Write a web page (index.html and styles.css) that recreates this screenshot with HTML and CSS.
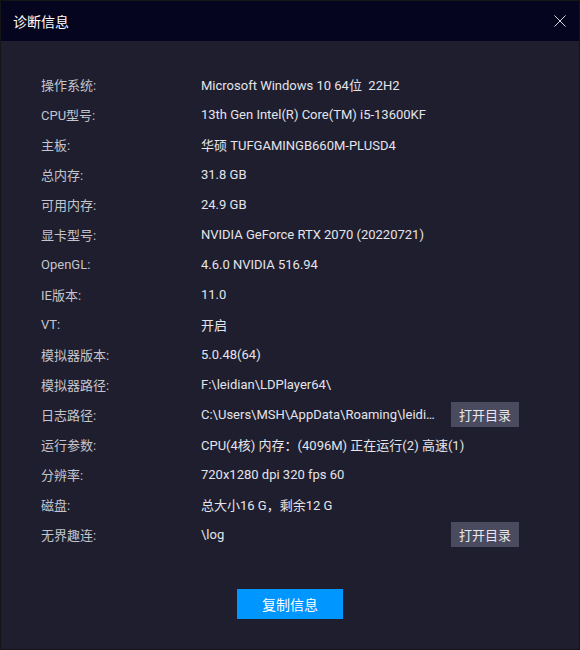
FILE: index.html
```html
<!DOCTYPE html>
<html lang="zh">
<head>
  <meta charset="UTF-8" />
  <title>诊断信息</title>
  <link rel="stylesheet" href="styles.css">
</head>
<body>
  <div class="dialog">
    <header class="dialog-header">
      <div class="dialog-title">诊断信息</div>
      <button class="close-btn" aria-label="关闭">
        <svg width="12" height="12" viewBox="0 0 12 12">
          <path d="M0.5 0.5L11.5 11.5M11.5 0.5L0.5 11.5" stroke="#d8d8e0" stroke-width="1" fill="none" />
        </svg>
      </button>
    </header>

    <main class="info-list">
      <div class="info-row"><span class="label">操作系统:</span><span class="value">Microsoft Windows 10 64位&nbsp;&nbsp;22H2</span></div>
      <div class="info-row"><span class="label">CPU型号:</span><span class="value">13th Gen Intel(R) Core(TM) i5-13600KF</span></div>
      <div class="info-row"><span class="label">主板:</span><span class="value">华硕 TUFGAMINGB660M-PLUSD4</span></div>
      <div class="info-row"><span class="label">总内存:</span><span class="value">31.8 GB</span></div>
      <div class="info-row"><span class="label">可用内存:</span><span class="value">24.9 GB</span></div>
      <div class="info-row"><span class="label">显卡型号:</span><span class="value">NVIDIA GeForce RTX 2070 (20220721)</span></div>
      <div class="info-row"><span class="label">OpenGL:</span><span class="value">4.6.0 NVIDIA 516.94</span></div>
      <div class="info-row"><span class="label">IE版本:</span><span class="value">11.0</span></div>
      <div class="info-row"><span class="label">VT:</span><span class="value">开启</span></div>
      <div class="info-row"><span class="label">模拟器版本:</span><span class="value">5.0.48(64)</span></div>
      <div class="info-row"><span class="label">模拟器路径:</span><span class="value">F:\leidian\LDPlayer64\</span></div>
      <div class="info-row"><span class="label">日志路径:</span><span class="value">C:\Users\MSH\AppData\Roaming\leidian\LDPlayer64\log</span><button class="open-btn">打开目录</button></div>
      <div class="info-row"><span class="label">运行参数:</span><span class="value">CPU(4核) 内存：(4096M) 正在运行(2) 高速(1)</span></div>
      <div class="info-row"><span class="label">分辨率:</span><span class="value">720x1280 dpi 320 fps 60</span></div>
      <div class="info-row"><span class="label">磁盘:</span><span class="value">总大小16 G，剩余12 G</span></div>
      <div class="info-row"><span class="label">无界趣连:</span><span class="value">\log</span><button class="open-btn">打开目录</button></div>
    </main>

    <div class="dialog-footer">
      <button class="copy-btn">复制信息</button>
    </div>
  </div>
</body>
</html>
```

FILE: styles.css
```css
* {
  margin: 0;
  padding: 0;
  box-sizing: border-box;
}

body {
  font-family: Roboto, "Noto Sans CJK SC", sans-serif;
  background: #0c0c0c;
}

.dialog {
  width: 580px;
  height: 650px;
  border: 1px solid #151515;
  background-color: #1e1e2f;
  display: flex;
  flex-direction: column;
}

.dialog-header {
  height: 40px;
  background-color: #050520;
  display: flex;
  align-items: center;
  justify-content: space-between;
  padding: 0 13px 0 12px;
}

.dialog-title {
  color: #fff;
  font-size: 14px;
}

.close-btn {
  background: transparent;
  border: none;
  width: 12px;
  height: 12px;
  display: flex;
  cursor: pointer;
}

.info-list {
  padding: 28px 60px 0 40px;
  display: flex;
  flex-direction: column;
}

.info-row {
  height: 30px;
  display: flex;
  align-items: center;
  font-size: 13px;
}

.label {
  width: 160px;
  flex-shrink: 0;
  color: #c4c4cc;
}

.value {
  flex: 1;
  min-width: 0;
  color: #e4e4ea;
  white-space: nowrap;
  overflow: hidden;
  text-overflow: ellipsis;
}

.open-btn {
  width: 68px;
  height: 25px;
  margin-left: 10px;
  border: none;
  background-color: #4a4b5f;
  color: #e8e8ee;
  font-family: inherit;
  font-size: 13px;
  cursor: pointer;
}

.open-btn:hover {
  background-color: #56576c;
}

.dialog-footer {
  display: flex;
  justify-content: center;
  padding-top: 40px;
}

.copy-btn {
  width: 106px;
  height: 30px;
  border: none;
  background-color: #0096ff;
  color: #fff;
  font-family: inherit;
  font-size: 14px;
  cursor: pointer;
}

.copy-btn:hover {
  background-color: #1aa2ff;
}
```
